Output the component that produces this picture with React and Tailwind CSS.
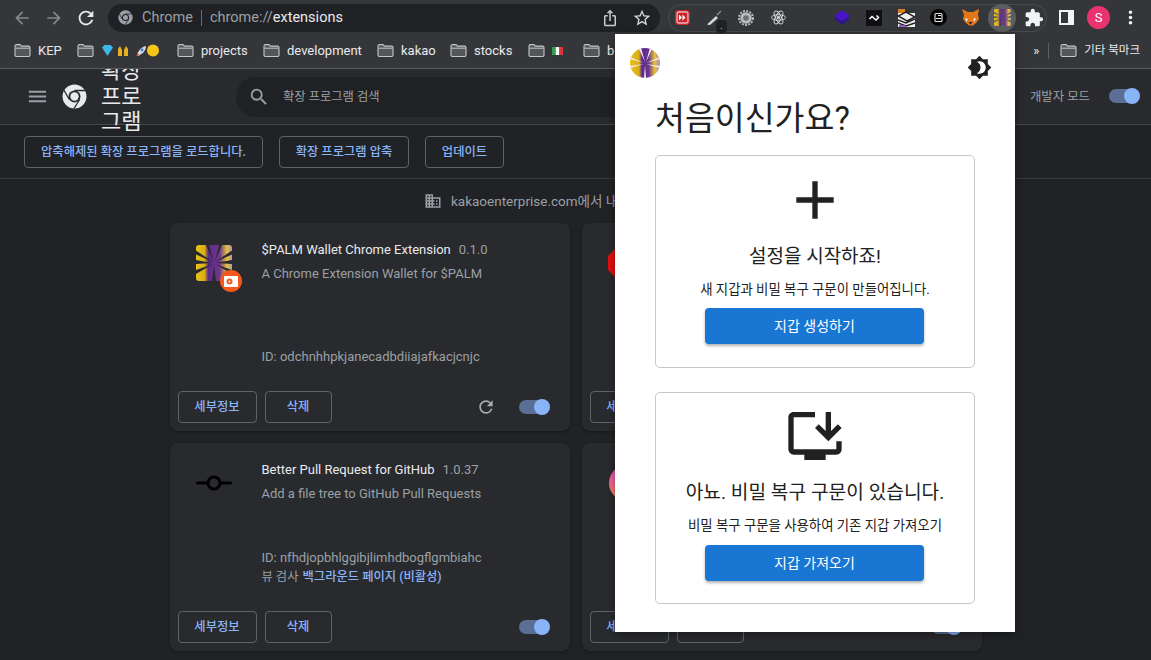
import React from "react";
import { MdAdd, MdArrowBack, MdArrowForward, MdBrightness4, MdDomain, MdExtension, MdInstallDesktop, MdMenu, MdMoreVert, MdOutlineIosShare, MdRefresh, MdSearch, MdStarBorder } from "react-icons/md";

const Folder = () => (
  <svg width="17" height="13" viewBox="0 0 17 13" className="shrink-0">
    <path d="M1 2A1.500 1.500 0 0 1 2.500 .6H6l1.500 1.500h7A1.500 1.500 0 0 1 16 3.600v7.400a1.500 1.500 0 0 1-1.500 1.500h-12A1.500 1.500 0 0 1 1 11z" fill="#55565a" stroke="#c4c7c5" strokeWidth="1.100" />
    <path d="M1.500 4.200h14" stroke="#c4c7c5" strokeWidth="1" />
  </svg>
);

const ChromeLogo = ({ size, color, bg }) => (
  <svg width={size} height={size} viewBox="0 0 48 48">
    <circle cx="24" cy="24" r="23" fill={color} />
    <circle cx="24" cy="24" r="11.500" fill={bg} />
    <circle cx="24" cy="24" r="8" fill={color} />
    <path d="M24 12.500H46M14 29.800 3 10.500M34 29.800 23 47" stroke={bg} strokeWidth="2.500" />
  </svg>
);

const PalmSquare = ({ size, id, notch }) => (
  <svg width={size} height={size} viewBox="0 0 36 36">
    <defs>
      <linearGradient id={id} x1="0" y1="0" x2="1" y2="0">
        <stop offset="0" stopColor="#eac414" />
        <stop offset="0.24" stopColor="#d9ad18" />
        <stop offset="0.34" stopColor="#5e2a88" />
        <stop offset="0.66" stopColor="#70368f" />
        <stop offset="0.86" stopColor="#e4c23a" />
        <stop offset="1" stopColor="#b393b8" />
      </linearGradient>
    </defs>
    <rect width="36" height="36" rx="3" fill={`url(#${id})`} />
    <g fill={notch}>
      <path d="M0 5.500V9.500L17 17zM0 15V19L16 18zM0 25V29L17 19zM36 5.500V9.500L19 17zM36 15V19L20 18zM36 25V29L19 19zM10 0H13L17 16zM23 0H26L19 16zM16 36H20L18 20z" />
    </g>
  </svg>
);

const PalmRound = () => (
  <svg width="30" height="30" viewBox="0 0 30 30">
    <defs>
      <linearGradient id="round" x1="0" y1="0" x2="1" y2="0">
        <stop offset="0" stopColor="#e9bf16" />
        <stop offset="0.3" stopColor="#d9ad18" />
        <stop offset="0.4" stopColor="#5b2a8a" />
        <stop offset="0.62" stopColor="#6c338f" />
        <stop offset="0.82" stopColor="#e3c13c" />
        <stop offset="1" stopColor="#a98bbd" />
      </linearGradient>
    </defs>
    <circle cx="15" cy="15" r="15" fill="url(#round)" />
    <path d="M0 9V11L14 15zM0 18V20L14 16zM9 1 11 0 15 14zM22 1 20 0 16 14zM30 9 30 11 16 15zM30 18V20L16 16zM14 30H16L15 17z" fill="#f3edf5" />
  </svg>
);

const Toggle = () => (
  <span className="relative inline-block w-[31px] h-4">
    <span className="absolute left-0 top-[1px] w-[29px] h-[14px] rounded-full bg-[#5b6f95]" />
    <span className="absolute right-0 top-0 w-4 h-4 rounded-full bg-[#8ab4f8]" />
  </span>
);

const OutlineBtn = ({ w, children }) => (
  <button className={`${w} h-8 pt-px rounded border border-[#5f6368] text-[12.300px] font-medium text-[#8ab4f8] flex items-center justify-center`}>{children}</button>
);

const Card = ({ icon, name, version, desc, id, extra, reload }) => (
  <div className="w-[400px] h-[208px] rounded-lg bg-[#292a2d] flex flex-col shadow-[0_1px_3px_rgba(0,0,0,0.3)]">
    <div className="flex-1 flex pt-[18px] min-h-0">
      <div className="w-[92px] pl-[26px] pt-[4px] shrink-0 relative">{icon}</div>
      <div className="flex flex-col flex-1 text-[13px] leading-[16px] pb-[26px] pt-px">
        <div className="flex gap-2 h-4">
          <span className="text-[#e8eaed]">{name}</span>
          <span className="text-[#9aa0a6]">{version}</span>
        </div>
        <div className="text-[#9aa0a6] mt-2">{desc}</div>
        <div className="text-[#9aa0a6] mt-auto">{id}</div>
        {extra}
      </div>
    </div>
    <div className="h-8 mb-2 px-2 flex items-start">
      <div className="flex gap-2">
        <OutlineBtn w="w-[79px]">세부정보</OutlineBtn>
        <OutlineBtn w="w-[67px]">삭제</OutlineBtn>
      </div>
      <div className="ml-auto flex items-center h-8 pr-3">
        {reload && <MdRefresh size={20} className="text-[#a8abaf] mr-[23px]" />}
        <Toggle />
      </div>
    </div>
  </div>
);

const Bookmark = ({ label, w, children }) => (
  <div className={`${w} flex items-center gap-[7px] text-[13px] text-[#e8eaed] shrink-0`}>
    <Folder />
    {label && <span>{label}</span>}
    {children}
  </div>
);

const IconSlot = ({ children }) => (
  <div className="w-8 h-7 flex items-center justify-center shrink-0">{children}</div>
);

export default function App() {
  return (
    <div className="relative w-[1151px] h-[660px] overflow-hidden bg-[#212225] font-['Roboto','Noto_Sans_CJK_KR',sans-serif]">
      <div className="relative z-10 bg-[#35363a]">
        {/* toolbar */}
        <div className="h-[35px] flex items-center">
          <div className="w-[108px] flex items-center pl-[12px] shrink-0">
            <MdArrowBack size={20} className="text-[#85878a]" />
            <MdArrowForward size={20} className="text-[#85878a] ml-3" />
            <MdRefresh size={22} className="text-[#e8eaed] ml-[11px]" />
          </div>
          <div className="w-[552px] h-7 rounded-full bg-[#202124] flex items-center pl-[10px] text-[14.500px] shrink-0">
            <ChromeLogo size={15} color="#9aa0a6" bg="#202124" />
            <span className="ml-[9px] pt-px text-[#9aa0a6]">Chrome</span>
            <span className="mx-2 w-px h-4 bg-[#6b6d70]" />
            <span className="pt-px text-[#9aa0a6]">chrome://</span>
            <span className="pt-px text-[#e8eaed]">extensions</span>
            <div className="ml-auto flex items-center gap-[13px] pr-2">
              <MdOutlineIosShare size={18} className="text-[#c8cacc]" />
              <MdStarBorder size={20} className="text-[#d5d7d9]" />
            </div>
          </div>
          <div className="ml-2 w-[379px] h-7 rounded-full border border-[#4a4b4f] flex items-center shrink-0">
            <div className="w-[29px] h-7 pr-[3px] flex items-center justify-center shrink-0">
              <svg width="15" height="15" viewBox="0 0 15 15"><rect x="0.800" y="0.800" width="13.400" height="13.400" rx="2.500" fill="#fff" stroke="#c6262a" strokeWidth="1.600" /><rect x="2.500" y="2.500" width="10" height="10" fill="#c6262a" /><path d="M4 4.500 7 7.500 4 10.500zM7.500 4.500 10.500 7.500 7.500 10.500z" fill="#fff" /></svg>
            </div>
            <div className="relative w-8 h-7 flex items-center justify-center shrink-0">
              <svg width="18" height="18" viewBox="0 0 18 18"><path d="M2 15.500 11 7l2 2-8 7z" fill="#d7d8da" /><path d="M12 6l4-4" stroke="#8a8b8d" strokeWidth="1.500" /></svg>
              <span className="absolute left-[18px] top-[16px] w-[11px] h-[13px] rounded-sm bg-[#202124] text-[#e8eaed] text-[9px] leading-[13px] text-center">.</span>
            </div>
            <IconSlot>
              <svg width="16" height="16" viewBox="0 0 16 16"><circle cx="8" cy="8" r="5.800" fill="#b8b9bb" /><circle cx="8" cy="8" r="7" fill="none" stroke="#b8b9bb" strokeWidth="2" strokeDasharray="2 1.300" /><circle cx="8" cy="8" r="2.800" fill="#6d6e70" /></svg>
            </IconSlot>
            <IconSlot>
              <svg width="17" height="17" viewBox="-9 -9 18 18" fill="none" stroke="#d6d7d9" strokeWidth="1"><ellipse rx="7.500" ry="3" /><ellipse rx="7.500" ry="3" transform="rotate(60)" /><ellipse rx="7.500" ry="3" transform="rotate(120)" /><circle r="1.400" fill="#d6d7d9" /></svg>
            </IconSlot>
            <IconSlot />
            <IconSlot>
              <svg width="18" height="20" viewBox="0 0 18 20"><path d="M9 5 17 11 9 17 1 11z" fill="#2d1a86" /><path d="M9 2 17 8 9 13 1 8z" fill="#4a14c8" /></svg>
            </IconSlot>
            <IconSlot>
              <svg width="16" height="16" viewBox="0 0 16 16"><rect width="16" height="16" fill="#101012" /><path d="M3.500 9 6 6.500 10 10 12.500 7.500 10.500 5.500" fill="none" stroke="#fff" strokeWidth="1.500" /></svg>
            </IconSlot>
            <IconSlot>
              <svg width="17" height="18" viewBox="0 0 17 18"><rect y="4" width="17" height="14" fill="#f0f0f0" /><path d="M0 0h7v4H0z" fill="#d97e1c" /><path d="M0 7 8 3l9 5-8 4zM0 11l8 3 9-4M0 14l8 3 9-3" fill="none" stroke="#222" strokeWidth="1.500" /><path d="M1 16h6v2H1z" fill="#9b59c8" /></svg>
            </IconSlot>
            <IconSlot>
              <svg width="17" height="17" viewBox="0 0 17 17"><circle cx="8.500" cy="8.500" r="8.500" fill="#050505" /><rect x="5" y="4.500" width="7" height="8" rx="1" fill="none" stroke="#e8e8e8" strokeWidth="1.100" /><path d="M6 9.500h5M8 6.500h3" stroke="#e8e8e8" strokeWidth="1" /></svg>
            </IconSlot>
            <IconSlot>
              <svg width="17" height="17" viewBox="0 0 17 17"><path d="M0 0 6 3h5l6-3-1 6 1 4-3 4-3 2.500H7L4 14l-3-4 1-4z" fill="#e2761b" /><path d="M3 9l3 1-1.500 3zM14 9l-3 1 1.500 3z" fill="#f6e7d8" /><path d="M6.500 13h4l-2 2.500z" fill="#2b2320" /></svg>
            </IconSlot>
            <IconSlot>
              <div className="w-7 h-7 rounded-full bg-[#5c5d61] flex items-center justify-center">
                <PalmSquare size={17} id="tb" notch="#5c5d61" />
              </div>
            </IconSlot>
            <IconSlot>
              <MdExtension size={20} className="text-[#f1f3f4]" />
            </IconSlot>
          </div>
          <div className="ml-[12px] flex items-center">
            <svg width="15" height="15" viewBox="0 0 15 15"><rect x="1" y="1" width="13" height="13" fill="none" stroke="#f1f3f4" strokeWidth="2" /><rect x="9" y="1" width="5" height="13" fill="#f1f3f4" /></svg>
            <span className="ml-[13px] w-[23px] h-[23px] rounded-full bg-[#e8336f] text-white text-[13px] flex items-center justify-center">S</span>
            <MdMoreVert size={21} className="text-[#f1f3f4] ml-[10px]" />
          </div>
        </div>
        {/* bookmarks */}
        <div className="h-[34px] border-b border-[#5a5b5f] flex items-center pl-[14px] pb-[2px] overflow-hidden">
          <Bookmark label="KEP" w="w-[63px]" />
          <Bookmark w="w-[100px]">
            <svg width="58" height="13" viewBox="0 0 58 13">
              <path d="M1 3.500 3.500 1h6L12 3.500 6.500 12z" fill="#3fb6e8" />
              <path d="M17 12V5l2-3 2 4v6zM23 12V6l2-4 2 3v7z" fill="#e8b020" />
              <path d="M36 11c1-4 4-8 9-9 0 5-4 8-8 10z" fill="#d8d8e0" /><path d="M35 12l2-3 1 2z" fill="#e8452c" /><circle cx="41" cy="6" r="1.400" fill="#3a76d8" />
              <circle cx="52" cy="6.500" r="6" fill="#f5c518" />
            </svg>
          </Bookmark>
          <Bookmark label="projects" w="w-[86px]" />
          <Bookmark label="development" w="w-[114px]" />
          <Bookmark label="kakao" w="w-[73px]" />
          <Bookmark label="stocks" w="w-[78px]" />
          <Bookmark w="w-[55px]">
            <svg width="11" height="8" viewBox="0 0 11 8"><rect width="3.700" height="8" fill="#2f9e4f" /><rect x="3.700" width="3.700" height="8" fill="#f4f4f4" /><rect x="7.400" width="3.600" height="8" fill="#d8383a" /></svg>
          </Bookmark>
          <Bookmark label="b" w="w-[40px]" />
          <div className="ml-auto flex items-center pr-[11px] text-[11.500px] text-[#e8eaed]">
            <span className="mr-[9px] text-[13px]">»</span>
            <span className="w-px h-4 bg-[#5f6064] mr-[11px]" />
            <Folder />
            <span className="ml-[7px]">기타 북마크</span>
          </div>
        </div>
      </div>

      {/* extensions header */}
      <div className="h-[56px] bg-[#292a2d] border-b border-[#46474b] flex items-center pl-[26px]">
        <MdMenu size={23} className="text-[#9aa0a6]" />
        <div className="ml-[13px]"><ChromeLogo size={25} color="#e8eaed" bg="#292a2d" /></div>
        <div className="ml-[14px] w-[42px] text-[22px] leading-[25.500px] text-[#e8eaed]">확장 프로그램</div>
        <div className="ml-[93px] h-10 w-[500px] rounded-full bg-[#202124] flex items-center pl-3 text-[12.300px] text-[#9aa0a6]">
          <MdSearch size={22} />
          <span className="ml-[13px] pt-px">확장 프로그램 검색</span>
        </div>
        <div className="ml-auto flex items-center pr-[11px] text-[12.400px] text-[#9aa0a6]">
          <span className="mr-[19px] pt-px">개발자 모드</span>
          <Toggle />
        </div>
      </div>
      {/* action row */}
      <div className="h-[54px] border-b border-[#3a3b3f] flex items-center gap-4 pl-6">
        <OutlineBtn w="w-[239px]">압축해제된 확장 프로그램을 로드합니다.</OutlineBtn>
        <OutlineBtn w="w-[130px]">확장 프로그램 압축</OutlineBtn>
        <OutlineBtn w="w-[79px]">업데이트</OutlineBtn>
      </div>

      <div className="h-[44px] flex items-center pl-[424px] text-[13.500px] text-[#9aa0a6]">
        <MdDomain size={18} />
        <span className="ml-[9px] whitespace-nowrap">kakaoenterprise.com에서 내 브라우저를 관리합니다</span>
      </div>

      <div className="grid grid-cols-[400px_400px] gap-3 w-[812px] mx-auto">
        <Card
          name="$PALM Wallet Chrome Extension"
          version="0.1.0"
          desc="A Chrome Extension Wallet for $PALM"
          id="ID: odchnhhpkjanecadbdiiajafkacjcnjc"
          reload
          icon={
            <div className="relative w-9 h-9">
              <PalmSquare size={36} id="c1" notch="#292a2d" />
              <span className="absolute left-[24px] top-[25px] w-[22px] h-[22px] rounded-full bg-[#f4581f] flex items-center justify-center">
                <svg width="14" height="11" viewBox="0 0 14 11"><rect width="14" height="11" rx="1" fill="#fff" /><circle cx="5.500" cy="5.500" r="3" fill="#f4581f" /><circle cx="5.500" cy="5.500" r="1" fill="#fff" /></svg>
              </span>
            </div>
          }
        />
        <Card
          icon={<svg width="36" height="36" viewBox="0 0 36 36"><path d="M11 0h14l11 11v14L25 36H11L0 25V11z" fill="#e01010" /></svg>}
        />
        <Card
          name="Better Pull Request for GitHub"
          version="1.0.37"
          desc="Add a file tree to GitHub Pull Requests"
          id="ID: nfhdjopbhlggibjlimhdbogflgmbiahc"
          extra={<div className="mt-[3px] text-[#9aa0a6] text-[12.300px]">뷰 검사 <a className="ml-px text-[#8ab4f8] font-medium">백그라운드 페이지 (비활성)</a></div>}
          icon={<svg width="36" height="36" viewBox="0 0 36 36" fill="none" stroke="#000" strokeWidth="3"><circle cx="18" cy="18" r="6" /><path d="M1.500 18h10M24.500 18h10" strokeLinecap="round" /></svg>}
        />
        <Card
          icon={<div className="w-9 h-9 rounded-full ml-px bg-gradient-to-b from-[#e834c8] to-[#f58529]" />}
        />
      </div>

      {/* extension popup */}
      <div className="absolute z-20 left-[615px] top-[34px] w-[400px] h-[598px] bg-white text-[#212121] flex flex-col shadow-[0_2px_8px_rgba(0,0,0,0.4)]">
        <div className="flex items-start justify-between pl-[15px] pr-[23px] pt-[14px]">
          <PalmRound />
          <MdBrightness4 size={25} className="text-[#212121] mt-[7px]" />
        </div>
        <h1 className="ml-[40px] mt-[15px] text-[32.500px] leading-[48px] font-normal">처음이신가요?</h1>
        <div className="ml-[40px] mt-[12px] w-[320px] h-[213px] rounded-[5px] border border-[#c8c8c8] flex flex-col items-center">
          <MdAdd size={64} className="mt-[12px]" />
          <div className="mt-[11px] text-[19px] leading-[28px]">설정을 시작하죠!</div>
          <div className="mt-[9px] text-[13.400px] leading-[20px]">새 지갑과 비밀 복구 구문이 만들어집니다.</div>
          <button className="mt-[8px] self-start ml-[49px] w-[219px] h-9 rounded bg-[#1976d2] text-white text-[14px] font-normal shadow-[0_2px_3px_rgba(0,0,0,0.3)]">지갑 생성하기</button>
        </div>
        <div className="ml-[40px] mt-[24px] w-[320px] h-[212px] rounded-[5px] border border-[#c8c8c8] flex flex-col items-center">
          <MdInstallDesktop size={64} className="mt-[11px]" />
          <div className="mt-[11px] text-[19.200px] leading-[28px]">아뇨. 비밀 복구 구문이 있습니다.</div>
          <div className="mt-[9px] text-[13.400px] leading-[20px]">비밀 복구 구문을 사용하여 기존 지갑 가져오기</div>
          <button className="mt-[9px] self-start ml-[49px] w-[219px] h-9 rounded bg-[#1976d2] text-white text-[14px] font-normal shadow-[0_2px_3px_rgba(0,0,0,0.3)]">지갑 가져오기</button>
        </div>
      </div>
    </div>
  );
}
